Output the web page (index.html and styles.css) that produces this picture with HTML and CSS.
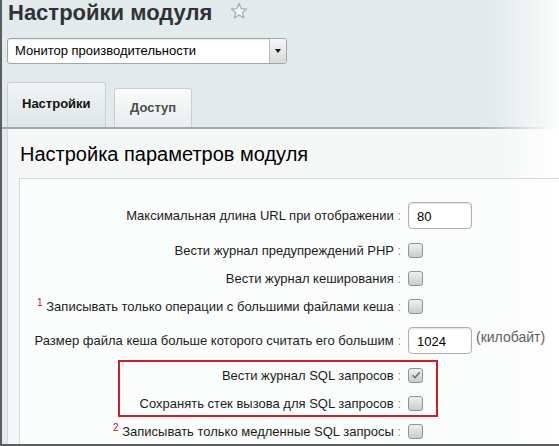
FILE: index.html
```html
<!DOCTYPE html>
<html lang="ru">
<head>
    <meta charset="UTF-8">
    <title>Настройки модуля</title>
    <link rel="stylesheet" href="styles.css">
</head>
<body>
    <div class="frame">
        <!-- заголовок страницы -->
        <div class="head">
            <h1>Настройки модуля</h1>
            <svg class="star" width="18" height="18" viewBox="0 0 18 18">
                <path d="M9 1.5 L11.1 6.6 L16.5 7 L12.4 10.5 L13.7 15.9 L9 13 L4.3 15.9 L5.6 10.5 L1.5 7 L6.9 6.6 Z" fill="#f4f6f6" stroke="#a9b0b2" stroke-width="1.3" stroke-linejoin="round"/>
            </svg>
        </div>

        <div class="select">
            <span class="select-text">Монитор производительности</span>
            <span class="select-btn"><span class="arrow"></span></span>
        </div>

        <!-- вкладки -->
        <div class="tabs">
            <div class="tab active">Настройки</div>
            <div class="tab">Доступ</div>
        </div>
        <div class="tab-rule"></div>

        <div class="panel">
            <h2>Настройка параметров модуля</h2>
            <div class="box">
                <div class="row tall">
                    <div class="label">Максимальная длина URL при отображении<span class="colon"> :</span></div>
                    <div class="field"><span class="input">80</span></div>
                </div>
                <div class="row">
                    <div class="label">Вести журнал предупреждений PHP<span class="colon"> :</span></div>
                    <div class="field"><span class="check"></span></div>
                </div>
                <div class="row">
                    <div class="label">Вести журнал кеширования<span class="colon"> :</span></div>
                    <div class="field"><span class="check"></span></div>
                </div>
                <div class="row">
                    <div class="label"><sup>1</sup> Записывать только операции с большими файлами кеша<span class="colon"> :</span></div>
                    <div class="field"><span class="check"></span></div>
                </div>
                <div class="row tall">
                    <div class="label">Размер файла кеша больше которого считать его большим<span class="colon"> :</span></div>
                    <div class="field"><span class="input">1024</span><span class="unit">(килобайт)</span></div>
                </div>
                <div class="marked">
                    <div class="row">
                        <div class="label">Вести журнал SQL запросов<span class="colon"> :</span></div>
                        <div class="field">
                            <span class="check">
                                <svg width="12" height="12" viewBox="0 0 12 12"><path d="M2.5 6.2 L5 8.6 L9.8 3.2" fill="none" stroke="#6c7274" stroke-width="1.5"/></svg>
                            </span>
                        </div>
                    </div>
                    <div class="row">
                        <div class="label">Сохранять стек вызова для SQL запросов<span class="colon"> :</span></div>
                        <div class="field"><span class="check"></span></div>
                    </div>
                </div>
                <div class="row">
                    <div class="label"><sup>2</sup> Записывать только медленные SQL запросы<span class="colon"> :</span></div>
                    <div class="field"><span class="check"></span></div>
                </div>
            </div>
        </div>
    </div>
</body>
</html>
```

FILE: styles.css
```css
/* основа */
html, body {
    margin: 0;
    padding: 0;
    overflow: hidden;
}

body {
    font-family: "Liberation Sans", Arial, sans-serif;
    font-size: 13px;
    color: #000;
    background: #fff;
}

.frame {
    width: 559px;
    height: 446px;
    box-sizing: border-box;
    border-left: 2px solid #5b5e60;
    border-bottom: 2px solid #5b5e60;
    overflow: hidden;
    background: linear-gradient(to right, #e3eaeb 0%, #e3eaeb 88%, #fbfcfc 100%);
}

/* заголовок */
.head {
    display: flex;
    align-items: center;
    height: 26px;
    padding-left: 6px;
}

h1 {
    margin: 0;
    font-size: 22px;
    line-height: 26px;
    font-weight: bold;
    color: #2f3336;
}

.star {
    margin-left: 18px;
    margin-top: -4px;
}

/* выпадающий список */
.select {
    display: flex;
    width: 280px;
    height: 26px;
    box-sizing: border-box;
    margin: 12px 0 0 5px;
    background: #fff;
    border: 1px solid #9fa6a8;
    border-radius: 3px;
    box-shadow: inset 0 1px 1px rgba(0, 0, 0, 0.08);
}

.select-text {
    flex: 1;
    padding-left: 7px;
    line-height: 24px;
}

.select-btn {
    width: 16px;
    display: flex;
    align-items: center;
    justify-content: center;
    border-left: 1px solid #b4babc;
    background: linear-gradient(#f7f7f7, #d6d9da);
    border-radius: 0 2px 2px 0;
}

.arrow {
    width: 0;
    height: 0;
    border-left: 3px solid transparent;
    border-right: 3px solid transparent;
    border-top: 4px solid #111;
}

/* вкладки */
.tabs {
    display: flex;
    align-items: flex-end;
    gap: 8px;
    height: 45px;
    margin-top: 18px;
    padding-left: 5px;
}

.tab {
    box-sizing: border-box;
    height: 39px;
    padding: 0 15px;
    border: 1px solid #c9d0d1;
    border-bottom: none;
    border-radius: 3px 3px 0 0;
    background: linear-gradient(#fafbfb, #e9eded);
    font-weight: bold;
    color: #4a4e50;
    line-height: 37px;
}

.tab.active {
    width: 99px;
    height: 45px;
    padding: 0 0 0 14px;
    line-height: 42px;
    color: #111;
    background: linear-gradient(#f1f4f4, #dfe6e7);
}

.tab-rule {
    height: 2px;
    background: linear-gradient(to right, #a2aaac 85%, rgba(162, 170, 172, 0) 98%);
}

/* панель настроек */
.panel {
    margin-left: 5px;
    height: 320px;
    padding-left: 12px;
    border-left: 1px solid #d3dadb;
    background: linear-gradient(to right, #f6f8f8 0%, #f6f8f8 90%, #fff 100%);
}

h2 {
    margin: 0;
    padding: 13px 0 12px;
    font-size: 20px;
    line-height: 24px;
    font-weight: normal;
    color: #000;
}

.box {
    margin-left: -1px;
    padding-top: 16px;
    height: 300px;
    border-top: 1px solid #d6dcdd;
    border-left: 1px solid #d6dcdd;
    background: linear-gradient(to right, #fbfcfc 0%, #fbfcfc 90%, #fff 100%);
}

.row {
    display: flex;
    align-items: center;
    height: 28px;
}

.row.tall {
    height: 41px;
}

.label {
    width: 381px;
    flex-shrink: 0;
    text-align: right;
    color: #1c1c1c;
    white-space: nowrap;
}

.colon {
    color: #8a8f91;
}

sup {
    color: #c0141c;
    font-size: 10px;
    line-height: 0;
}

.field {
    display: flex;
    align-items: center;
    margin-left: 7px;
}

.input {
    box-sizing: border-box;
    width: 64px;
    height: 27px;
    padding-left: 8px;
    line-height: 27px;
    border: 1px solid #a9b1b3;
    border-radius: 4px;
    background: #fff;
    box-shadow: inset 0 1px 2px rgba(0, 0, 0, 0.12);
}

.unit {
    margin-left: 4px;
    margin-top: -8px;
    font-size: 14px;
    color: #5c6163;
}

.check {
    box-sizing: border-box;
    width: 15px;
    height: 15px;
    display: flex;
    align-items: center;
    justify-content: center;
    border: 1px solid #8e9596;
    border-radius: 3px;
    background: linear-gradient(#eef0f0, #c9cdce);
}

/* выделенная красная рамка */
.marked {
    position: relative;
}

.marked::after {
    content: "";
    position: absolute;
    left: 98px;
    top: -1px;
    width: 320px;
    height: 57px;
    box-sizing: border-box;
    border: 2px solid #cc1f27;
}
```
